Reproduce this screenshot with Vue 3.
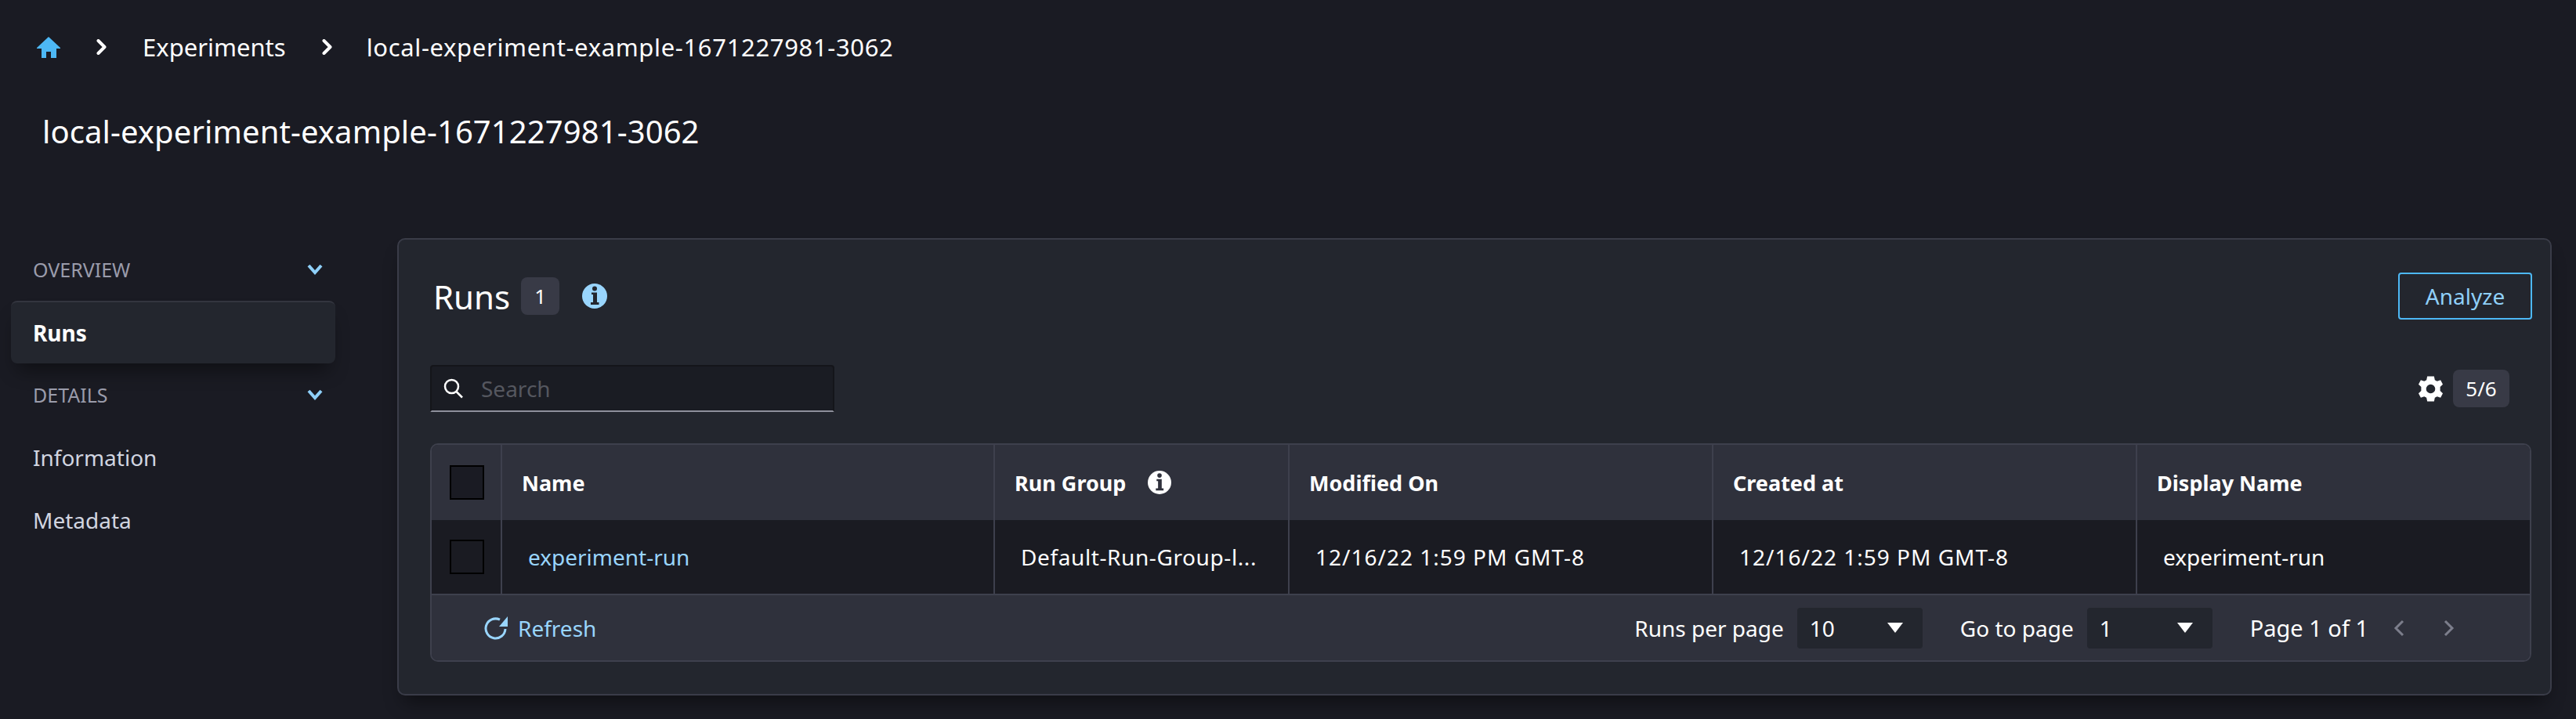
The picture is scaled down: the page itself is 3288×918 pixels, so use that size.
<template>
  <div class="page">
    <nav class="crumbs">
      <svg class="home" viewBox="0 0 30 27"><path d="M15 0 L30 14 V15 H25 V27 H18 V19 H12 V27 H6 V15 H0 V14 Z" /></svg>
      <svg class="crumb-sep" viewBox="0 0 13 20"><path d="M2.500 2 L10.500 10 L2.500 18" /></svg>
      <span>Experiments</span>
      <svg class="crumb-sep" viewBox="0 0 13 20"><path d="M2.500 2 L10.500 10 L2.500 18" /></svg>
      <span class="crumb-last">local-experiment-example-1671227981-3062</span>
    </nav>
    <h1 class="page-title">local-experiment-example-1671227981-3062</h1>

    <div class="body">
      <aside class="side">
        <template v-for="group in groups" :key="group.title">
          <div class="side-head">
            <span>{{ group.title }}</span>
            <svg viewBox="0 0 20 14"><path d="M2 2 L10 11 L18 2" /></svg>
          </div>
          <a
            v-for="item in group.items"
            :key="item"
            class="side-item"
            :class="{ active: item === 'Runs' }"
          >{{ item }}</a>
        </template>
      </aside>

      <section class="panel">
        <div class="panel-head">
          <h2>Runs</h2>
          <span class="badge count">1</span>
          <svg class="info" viewBox="0 0 32 32">
            <circle cx="16" cy="16" r="16" fill="#99d5fd" />
            <circle cx="16" cy="6.500" r="3" fill="#23262e" />
            <path d="M12 11.500 H19 V24 H21.500 V27 H11 V24 H14 V14 H12 Z" fill="#23262e" />
          </svg>
          <button class="analyze">Analyze</button>
        </div>

        <div class="tools">
          <label class="search">
            <svg viewBox="0 0 26 26"><circle cx="10.500" cy="10.500" r="8.500" /><path d="M16.500 17 L24 24.500" /></svg>
            <span>Search</span>
          </label>
          <svg class="gear" viewBox="0 0 32 33">
            <path fill-rule="evenodd" d="M11.500 0 H20.500 L21.500 4.800 L24.500 6.500 L29 5 L32 10.500 L28.500 13.800 V19.200 L32 22.500 L29 28 L24.500 26.500 L21.500 28.200 L20.500 33 H11.500 L10.500 28.200 L7.500 26.500 L3 28 L0 22.500 L3.500 19.200 V13.800 L0 10.500 L3 5 L7.500 6.500 L10.500 4.800 Z M16 10.500 A6 6 0 1 0 16 22.500 A6 6 0 1 0 16 10.500 Z" />
          </svg>
          <span class="badge cols">5/6</span>
        </div>

        <div class="table">
          <div class="row head">
            <div class="cell check"><i class="box"></i></div>
            <div class="cell name">Name</div>
            <div class="cell">
              Run Group
              <svg class="head-info" viewBox="0 0 32 32">
                <circle cx="16" cy="16" r="16" fill="#fff" />
                <circle cx="16" cy="6.500" r="3" fill="#2f313c" />
                <path d="M12 11.500 H19 V24 H21.500 V27 H11 V24 H14 V14 H12 Z" fill="#2f313c" />
              </svg>
            </div>
            <div class="cell">Modified On</div>
            <div class="cell">Created at</div>
            <div class="cell">Display Name</div>
          </div>
          <div class="row data">
            <div class="cell check"><i class="box"></i></div>
            <div class="cell name"><a>experiment-run</a></div>
            <div class="cell group">Default-Run-Group-l...</div>
            <div class="cell date">12/16/22 1:59 PM GMT-8</div>
            <div class="cell date">12/16/22 1:59 PM GMT-8</div>
            <div class="cell">experiment-run</div>
          </div>
          <div class="foot">
            <a class="refresh">
              <svg viewBox="0 0 30 30">
                <path class="arc" d="M20 4.200 A12.500 12.500 0 1 0 27 16" />
                <path class="tip" d="M30 0 V13 H19 Z" />
              </svg>
              Refresh
            </a>
            <div class="pager">
              <span>Runs per page</span>
              <div class="select">10<i></i></div>
              <span class="go">Go to page</span>
              <div class="select">1<i></i></div>
              <span class="of">Page 1 of 1</span>
              <svg class="pg" viewBox="0 0 16 24"><path d="M13 3 L4 12 L13 21" /></svg>
              <svg class="pg next" viewBox="0 0 16 24"><path d="M3 3 L12 12 L3 21" /></svg>
            </div>
          </div>
        </div>
      </section>
    </div>
  </div>
</template>

<script setup>
const groups = [
  { title: "OVERVIEW", items: ["Runs"] },
  { title: "DETAILS", items: ["Information", "Metadata"] },
];
</script>

<style>
html,
body {
  margin: 0;
  background: #1a1b23;
}
</style>

<style scoped>
.page {
  width: 3288px;
  height: 918px;
  overflow: hidden;
  background: #1a1b23;
  color: #fff;
  font-family: "Noto Sans", "Open Sans", sans-serif;
  font-size: 28px;
}

.crumbs {
  display: flex;
  align-items: center;
  height: 120px;
  padding-left: 47px;
  font-size: 31px;
}

.crumb-last {
  margin-left: -2px;
  letter-spacing: 0.65px;
}

.home {
  width: 30px;
  height: 27px;
  fill: #4db8f5;
}

.crumb-sep {
  width: 13px;
  height: 20px;
  margin: 0 46px;
  fill: none;
  stroke: #fff;
  stroke-width: 4;
  stroke-linecap: round;
  stroke-linejoin: round;
}

.page-title {
  margin: 0;
  padding-left: 54px;
  height: 96px;
  line-height: 96px;
  font-size: 40px;
  font-weight: 400;
  letter-spacing: 0.1px;
}

.body {
  display: flex;
  margin-top: 88px;
}

.side {
  width: 414px;
  margin-left: 14px;
  margin-right: 79px;
}

.side-head {
  display: flex;
  align-items: center;
  justify-content: space-between;
  height: 40px;
  margin: 20px 0;
  padding: 0 16px 0 28px;
  color: #9a9cab;
  font-size: 25px;
}

.side-head svg {
  width: 20px;
  height: 14px;
  fill: none;
  stroke: #8fd0f9;
  stroke-width: 4;
}

.side-item {
  display: flex;
  align-items: center;
  height: 80px;
  padding-left: 28px;
  color: #d1d5e0;
}

.side-item.active {
  background: #23262e;
  border-top: 2px solid #33353f;
  border-radius: 8px;
  box-sizing: border-box;
  box-shadow: 0 16px 24px -8px rgba(0, 0, 0, 0.45);
  color: #fff;
  font-weight: 700;
}

.panel {
  width: 2750px;
  height: 584px;
  box-sizing: border-box;
  background: #23262e;
  border: 2px solid #3a3c48;
  border-radius: 10px;
  box-shadow: 0 16px 24px -8px rgba(0, 0, 0, 0.45);
  padding: 42px 23px 0 40px;
}

.panel-head {
  display: flex;
  align-items: center;
  height: 60px;
}

.panel-head h2 {
  margin: 0 0 0 4px;
  font-size: 42px;
  font-weight: 400;
}

.badge {
  display: flex;
  align-items: center;
  justify-content: center;
  height: 48px;
  background: #383a46;
  border-radius: 8px;
  font-size: 26px;
}

.count {
  width: 49px;
  margin-left: 14px;
}

.info {
  width: 32px;
  height: 32px;
  margin-left: 29px;
}

.analyze {
  margin-left: auto;
  width: 171px;
  height: 60px;
  background: none;
  border: 2px solid #4db8f5;
  border-radius: 4px;
  color: #8fd0f9;
  font: inherit;
}

.tools {
  display: flex;
  align-items: center;
  height: 60px;
  margin-top: 58px;
}

.search {
  display: flex;
  align-items: center;
  width: 516px;
  height: 60px;
  box-sizing: border-box;
  background: #1a1c23;
  border: 2px solid #14151a;
  border-bottom-color: #8e909c;
  border-radius: 4px 4px 0 0;
  padding-left: 15px;
  color: #55575f;
}

.search svg {
  width: 26px;
  height: 26px;
  margin-right: 22px;
  fill: none;
  stroke: #fff;
  stroke-width: 2.500;
}

.gear {
  width: 31px;
  height: 33px;
  margin-left: auto;
  fill: #fff;
}

.cols {
  width: 72px;
  margin-left: 13px;
  margin-right: 29px;
}

.table {
  margin-top: 40px;
  width: 2682px;
  box-sizing: border-box;
  border: 2px solid #3e404d;
  border-radius: 10px;
  overflow: hidden;
}

.row {
  display: grid;
  grid-template-columns: 88px 629px 376px 541px 541px 1fr;
}

.head {
  height: 96px;
  background: #2f313c;
  font-weight: 700;
  font-size: 27px;
}

.data {
  height: 94px;
  background: #1a1b22;
  font-size: 28px;
}

.cell {
  display: flex;
  align-items: center;
  min-width: 0;
  padding-left: 25px;
  border-left: 2px solid #3e404d;
  white-space: nowrap;
}

.data .cell {
  padding-left: 33px;
}

.cell.group {
  letter-spacing: 0.6px;
}

.cell.date {
  letter-spacing: 1px;
}

.cell.check,
.data .cell.check {
  border-left: 0;
  padding-left: 23px;
}

.box {
  width: 44px;
  height: 44px;
  box-sizing: border-box;
  border: 2px solid #000;
}

.head .box {
  background: #1a1b23;
}

.head-info {
  width: 30px;
  height: 30px;
  margin-left: 28px;
}

.name a {
  color: #99d5fd;
}

.foot {
  display: flex;
  align-items: center;
  justify-content: space-between;
  height: 85px;
  box-sizing: border-box;
  background: #2f313c;
  border-top: 2px solid #3e404d;
  padding: 0 95px 0 67px;
}

.refresh {
  display: flex;
  align-items: center;
  gap: 13px;
  color: #99d5fd;
}

.refresh svg {
  width: 30px;
  height: 30px;
}

.arc {
  fill: none;
  stroke: #99d5fd;
  stroke-width: 3;
}

.tip {
  fill: #99d5fd;
}

.pager {
  display: flex;
  align-items: center;
}

.select {
  display: flex;
  align-items: center;
  justify-content: space-between;
  width: 160px;
  height: 52px;
  box-sizing: border-box;
  margin-left: 17px;
  padding: 0 25px 0 16px;
  background: #23262e;
  border-radius: 4px;
}

.select i {
  border-left: 10px solid transparent;
  border-right: 10px solid transparent;
  border-top: 13px solid #fff;
}

.go {
  margin-left: 48px;
}

.of {
  margin-left: 48px;
  font-size: 29px;
}

.pg {
  width: 16px;
  height: 24px;
  margin-left: 31px;
  fill: none;
  stroke: #7c7e8c;
  stroke-width: 3;
}

.pg.next {
  margin-left: 48px;
}
</style>
